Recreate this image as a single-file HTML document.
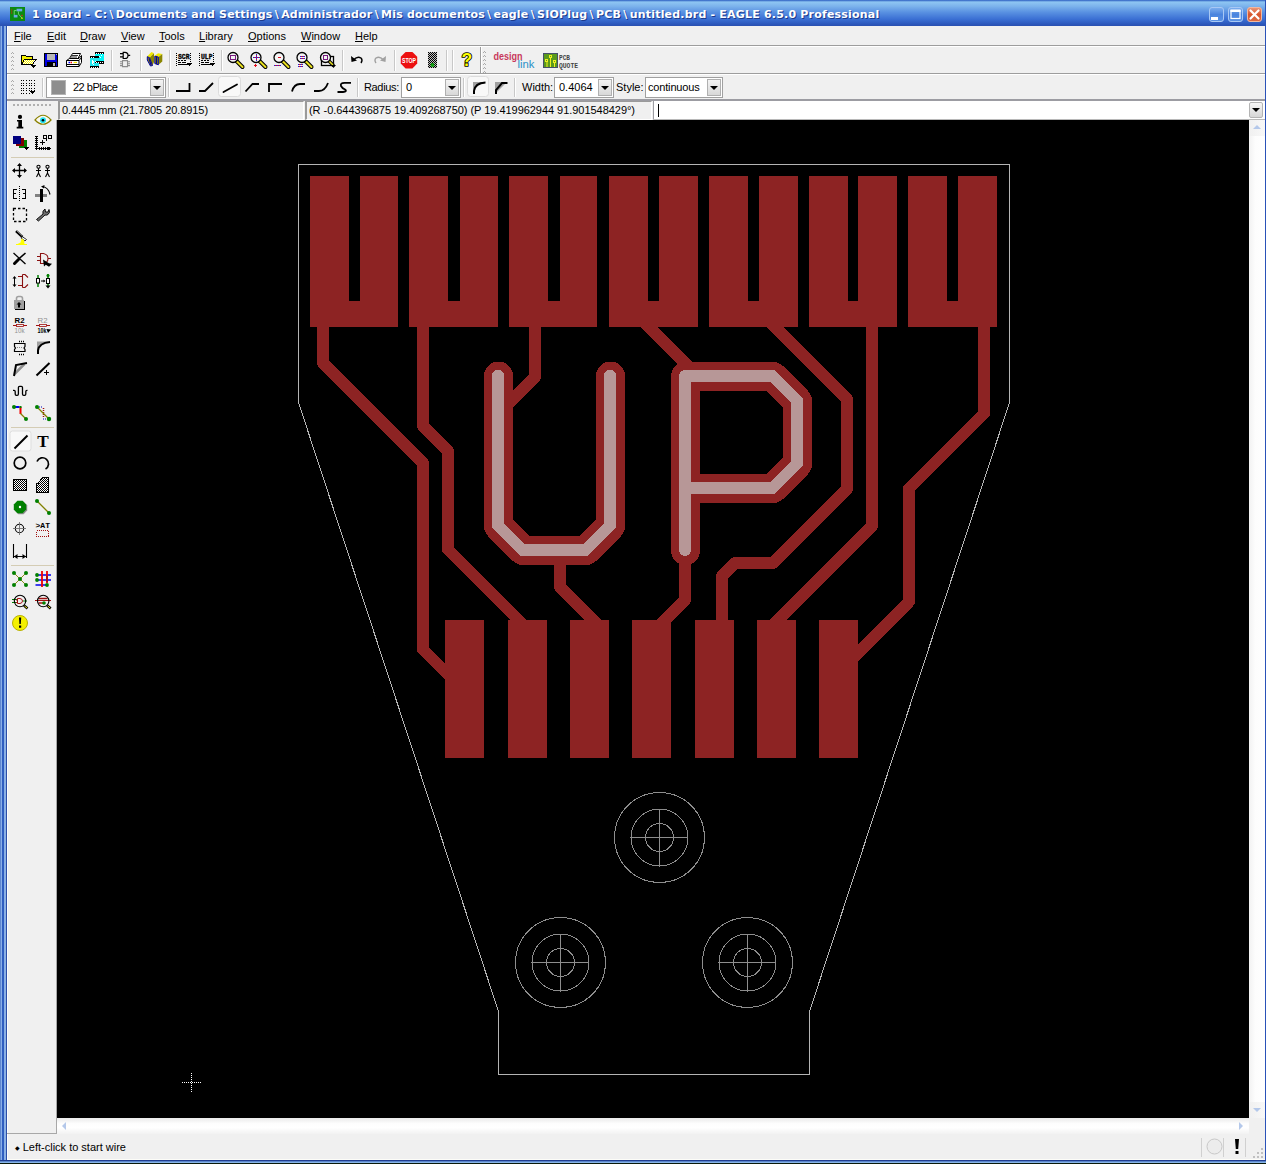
<!DOCTYPE html>
<html><head><meta charset="utf-8"><title>1 Board - EAGLE 6.5.0 Professional</title>
<style>
html,body{margin:0;padding:0;}
body{width:1266px;height:1164px;position:relative;overflow:hidden;background:#f0f0f0;font-family:"Liberation Sans","DejaVu Sans",sans-serif;font-size:11px;color:#000;}
.abs{position:absolute;}
#frameL{left:0;top:0;width:8px;height:1164px;background:linear-gradient(90deg,#6088d0 0,#6088d0 1px,#8ab0e8 1px,#8ab0e8 2px,#2f5ec0 2px,#2f5ec0 4px,#8ab0e4 4px,#8ab0e4 6px,#2a4ea8 6px,#2a4ea8 7px,#fdfdfd 7px);}
#frameR{left:1265px;top:0;width:1px;height:1164px;background:#2a52b8;}
#frameB{left:0;top:1160px;width:1266px;height:4px;background:linear-gradient(#203c90 0,#203c90 1px,#5a86cc 1px,#5a86cc 2px,#88b4e8 2px,#88b4e8 3px,#0a1a0a 3px);}
#title{left:0;top:0;width:1266px;height:26px;background:linear-gradient(#2a5cc0 0,#8ec6f2 2px,#7db4ec 6px,#5a92e2 12px,#3b70d4 19px,#2c58bc 24px,#2a50b0 26px);}
#title .txt{left:32px;top:8px;font-family:"DejaVu Sans","Liberation Sans",sans-serif;font-weight:bold;font-size:11px;color:#fff;white-space:nowrap;text-shadow:1px 1px 0 #1c3a8c;letter-spacing:0.2px;}
#title .txt b{margin:0 2.2px;}
.menu{top:29px;height:14px;line-height:14px;font-size:11px;white-space:nowrap;}
.menu u{text-decoration:underline;}
.hline{left:7px;width:1258px;height:1px;background:#9d9d9d;}
.hline2{left:7px;width:1258px;height:1px;background:#fff;}
#canvas{left:57px;top:120px;width:1192px;height:998px;background:#000;}
#board{position:absolute;left:0;top:0;}
.vsep{width:1px;height:20px;background:#c5c5c5;border-right:1px solid #fff;}
.combo{background:#fff;border:1px solid #a0a0a0;box-sizing:border-box;height:20px;}
.combo .btn{position:absolute;right:1px;top:1px;bottom:1px;width:14px;background:linear-gradient(#f4f4f4,#d8d8d8);border:1px solid #b0b0b0;box-sizing:border-box;}
.combo .btn:after{content:"";position:absolute;left:2px;top:6px;border:4px solid transparent;border-top:4px solid #000;border-bottom:none;}
.lbl{font-size:11px;white-space:nowrap;line-height:14px;}
.field{box-sizing:border-box;height:18px;border-top:1px solid #9a9a9a;border-left:2px solid #9a9a9a;border-right:1px solid #fff;border-bottom:1px solid #fff;}
</style></head><body>
<div id="title" class="abs">
 <svg class="abs" style="left:10px;top:7px" width="15" height="14" preserveAspectRatio="none" viewBox="0 0 16 16"><rect width="16" height="16" fill="#0b8a12"/><rect x="7" y="2" width="6" height="3" fill="#6aa8e8"/><rect x="4" y="9" width="4" height="3" fill="#6aa8e8"/><path d="M7,4H4.500V9M9,5V8L13,13" stroke="#6fdc6f" fill="none"/><rect x="12" y="9" width="1.5" height="1.5" fill="#e02020"/><rect x="12" y="12" width="1.5" height="1.5" fill="#f0f000"/><rect x="1" y="2" width="1.5" height="6" fill="#6b5a10"/></svg>
 <div class="abs txt">1 Board - C:<b>\</b>Documents and Settings<b>\</b>Administrador<b>\</b>Mis documentos<b>\</b>eagle<b>\</b>SIOPlug<b>\</b>PCB<b>\</b>untitled.brd - EAGLE 6.5.0 Professional</div>
 <svg class="abs" style="left:1205px;top:4px" width="60" height="20" viewBox="1205 4 60 20">
 <defs><linearGradient id="wb" x1="0" y1="0" x2="0" y2="1"><stop offset="0" stop-color="#7fb0ee"/><stop offset=".5" stop-color="#4a84de"/><stop offset="1" stop-color="#5a92e4"/></linearGradient>
 <linearGradient id="wc" x1="0" y1="0" x2="0" y2="1"><stop offset="0" stop-color="#ea9a7c"/><stop offset=".5" stop-color="#d8562e"/><stop offset="1" stop-color="#dc6a44"/></linearGradient></defs>
 <rect x="1209.5" y="7.5" width="14" height="14" rx="2.5" fill="url(#wb)" stroke="#a8c8f4"/>
 <rect x="1228.5" y="7.5" width="14" height="14" rx="2.5" fill="url(#wb)" stroke="#a8c8f4"/>
 <rect x="1247.5" y="7.5" width="14" height="14" rx="2.5" fill="url(#wc)" stroke="#f0b8a0"/>
 <rect x="1211" y="17" width="7" height="3" fill="#fff"/>
 <rect x="1231" y="10.5" width="9" height="8" fill="none" stroke="#fff" stroke-width="1.2"/><rect x="1230.5" y="9.5" width="10" height="2.5" fill="#fff"/>
 <path d="M1250.5,10.500l8,8M1258.5,10.500l-8,8" stroke="#fff" stroke-width="2.2" stroke-linecap="round"/>
</svg>

</div>
<div id="frameL" class="abs" style="top:26px;height:1134px"></div>
<div id="frameR" class="abs"></div>
<div id="frameB" class="abs"></div><div class="abs" style="left:7px;top:1159px;width:1258px;height:1px;background:#fdfdf8"></div>

<!-- menu -->
<div class="abs menu" style="left:14px"><u>F</u>ile</div>
<div class="abs menu" style="left:47px"><u>E</u>dit</div>
<div class="abs menu" style="left:80px"><u>D</u>raw</div>
<div class="abs menu" style="left:121px"><u>V</u>iew</div>
<div class="abs menu" style="left:159px"><u>T</u>ools</div>
<div class="abs menu" style="left:199px"><u>L</u>ibrary</div>
<div class="abs menu" style="left:248px"><u>O</u>ptions</div>
<div class="abs menu" style="left:301px"><u>W</u>indow</div>
<div class="abs menu" style="left:355px"><u>H</u>elp</div>
<div class="abs hline" style="top:45px"></div><div class="abs hline2" style="top:46px"></div>
<div class="abs hline" style="top:73px"></div><div class="abs hline2" style="top:74px"></div>
<div class="abs hline" style="top:99px"></div>

<!-- toolbar 1 -->
<svg class="abs" style="left:7px;top:47px" width="600" height="26" viewBox="7 47 600 26">
 <g fill="#aaa" shape-rendering="crispEdges"><rect x="12" y="52" width="1" height="1"/><rect x="11" y="53" width="1" height="1"/><rect x="13" y="53" width="1" height="1"/><rect x="12" y="56" width="1" height="1"/><rect x="11" y="57" width="1" height="1"/><rect x="13" y="57" width="1" height="1"/><rect x="12" y="60" width="1" height="1"/><rect x="11" y="61" width="1" height="1"/><rect x="13" y="61" width="1" height="1"/><rect x="12" y="64" width="1" height="1"/><rect x="11" y="65" width="1" height="1"/><rect x="13" y="65" width="1" height="1"/><rect x="12" y="68" width="1" height="1"/><rect x="11" y="69" width="1" height="1"/><rect x="13" y="69" width="1" height="1"/></g>
 <!-- open -->
 <defs><pattern id="dy" width="2" height="2" patternUnits="userSpaceOnUse"><rect width="2" height="2" fill="#f4f000"/><rect width="1" height="1" fill="#fff"/><rect x="1" y="1" width="1" height="1" fill="#fff"/></pattern></defs>
 <g shape-rendering="crispEdges"><path d="M21.5,64.500v-8.500l1,-1h3l1,1.500h5.500v3" fill="#f4f000" stroke="#000"/><path d="M21.5,64.500l3,-5h11.500l-3.5,5z" fill="url(#dy)" stroke="#000"/><path d="M31,65h5l-2.5,3z" fill="#000"/></g>
 <!-- save -->
 <g shape-rendering="crispEdges"><rect x="44.5" y="53.5" width="13" height="13" fill="#0000e0" stroke="#000"/><rect x="47" y="54" width="8" height="6" fill="#b8b8b8"/><rect x="47" y="62" width="9" height="5" fill="#000"/><rect x="53" y="63" width="2" height="3" fill="#b8b8b8"/><rect x="56" y="54" width="1" height="1" fill="#b8b8b8"/></g>
 <!-- print -->
 <g stroke-linejoin="round"><path d="M69.5,58.500l3,-5h8l-2.5,5z" fill="#fff" stroke="#000"/><path d="M66.5,60.500l3,-2h9.500l2.5,-3v7l-2.5,4h-12.500z" fill="#fff" stroke="#000"/><path d="M66.5,60.500h12.500v6M79,60.500l2.5,-3M67,64.500h12" stroke="#000" fill="none"/><path d="M68.5,62.500h1.5" stroke="#00f" stroke-width="1.3"/><path d="M70.5,62.500h1.5" stroke="#f00" stroke-width="1.3"/><path d="M73.5,62.500h3.5" stroke="#f0e000" stroke-width="1.3"/><path d="M72,55.500h6M71,57h6" stroke="#000" stroke-width=".8"/></g>
 <!-- cam -->
 <g shape-rendering="crispEdges"><rect x="95" y="52" width="9" height="12" fill="#000"/><rect x="95" y="54" width="9" height="8" fill="#00f8f8"/><rect x="90" y="56" width="9" height="12" fill="#000"/><rect x="90" y="58" width="9" height="8" fill="#20e8f0"/><rect x="95" y="61" width="9" height="2" fill="#000"/><path d="M96,53h8M91,57h3M91,67h8M96,62h8" stroke="#fff" stroke-dasharray="1 1"/><path d="M92,60l2,2l-2,2z" fill="#fff"/><path d="M99,56h1M101,55h1M100,57h1M93,64h1M95,61h1" stroke="#fff"/></g>
 <path d="M111.5,50v21M140.5,50v21M169.5,50v21M221.5,50v21M342.5,50v21M394.5,50v21M446.5,50v21M452.5,50v21" stroke="#c8c8c8"/>
 <path d="M112.5,50v21M141.5,50v21M170.5,50v21M222.5,50v21M343.5,50v21M395.5,50v21M447.5,50v21M453.5,50v21" stroke="#fff"/>
 <!-- board/schematic -->
 <g fill="none" stroke="#000" stroke-width="1.2"><path d="M120,53.700h3.200M120,56.800h3.200M123.2,52.300v6.200h1.700a3.1,3.1 0 0 0 0,-6.200zM127.8,55.300h2.400"/></g>
 <g fill="none" stroke="#8c8c8c" stroke-width="1.1"><path d="M122.5,60.600h5v6h-5zM120,61.800h2.500M120,63.700h2.500M120,65.600h2.500M127.5,61.800h2.500M127.5,63.700h2.500M127.5,65.600h2.5"/></g>
 <!-- library -->
 <g stroke-linejoin="round"><path d="M147,56.500L151.5,52L154,53.200L149.5,57.700z" fill="#f0e800"/><path d="M149.5,57.700L154,53.200V62L152.5,65.500z" fill="#8a8600"/><path d="M147.3,56.700L149.5,57.700L152.5,65.500L150.5,66L147.3,60z" fill="#8a8600" stroke="#0000a0"/><path d="M149,58.500l2,6.5" stroke="#0000a0" fill="none"/>
 <path d="M154.5,56L158,53.200L162.3,54L158.5,57z" fill="#f0e800"/><path d="M158.5,57L162.3,54V61.500L158.5,64.800z" fill="#8a8600"/><path d="M154.8,56.200L158.3,57V64.800L154.8,63.500z" fill="#8a8600" stroke="#0000a0"/><path d="M156.5,57v7" stroke="#0000a0" fill="none"/></g>
 <!-- SCR -->
 <g shape-rendering="crispEdges" stroke="#000" fill="none"><path d="M176.5,53v14M190.5,53v10" stroke-dasharray="1 1"/><path d="M178,60.500h2M181,60.500h2M184,60.500h2M178,62.500h3M182,62.500h4M178,64.500h12"/><path d="M187,63h5l-2.5,3.500z" fill="#000" stroke="none"/></g>
 <text x="178" y="58.5" font-family="Liberation Mono,monospace" font-weight="bold" font-size="7.5" stroke="#000" stroke-width=".35" textLength="11.5" lengthAdjust="spacingAndGlyphs">SCR</text>
 <g shape-rendering="crispEdges" stroke="#000" fill="none"><path d="M199.5,53v14M213.5,53v10" stroke-dasharray="1 1"/><path d="M201,60.500h2M204,60.500h2M207,60.500h2M201,62.500h3M205,62.500h4M201,64.500h12"/><path d="M210,63h5l-2.5,3.500z" fill="#000" stroke="none"/></g>
 <text x="201" y="58.5" font-family="Liberation Mono,monospace" font-weight="bold" font-size="7.5" stroke="#000" stroke-width=".35" textLength="11.5" lengthAdjust="spacingAndGlyphs">ULP</text>
 <!-- zooms -->
 <g id="zm"><path d="M236.5,61l6,6" stroke="#000" stroke-width="4" stroke-linecap="round"/><path d="M237,61.500l5.5,5.5" stroke="#e8e020" stroke-width="2" stroke-linecap="round"/><circle cx="233" cy="57.5" r="5" fill="#f4f4f4" stroke="#000" stroke-width="1.3"/></g>
 <use href="#zm" x="23"/><use href="#zm" x="46"/><use href="#zm" x="69"/>
 <rect x="230.5" y="55.5" width="5" height="4" fill="none" stroke="#d01020" /><rect x="230.5" y="55.5" width="5" height="4" fill="none" stroke="#2020e0" stroke-dasharray="1 1"/>
 <path d="M253,57.500h7M256.5,54v7M254,65.500h3M255.5,64v3" stroke="#e01020" fill="none"/><path d="M253,57.500h7M256.5,54v7" stroke="#2020e0" stroke-dasharray="1 1" fill="none"/>
 <path d="M278,57.500h3M274,65.500h7" stroke="#e01020"/><path d="M274,65.500h7" stroke="#2020e0" stroke-dasharray="1 1"/>
 <path d="M300,56.500h5M300,58.500h5M298,64.500h5M298,66.500h5" stroke="#e01020"/><path d="M300,56.500h5M300,58.500h5M298,64.500h5M298,66.500h5" stroke="#2020e0" stroke-dasharray="1 1"/>
 <!-- zoom select -->
 <g><rect x="321.5" y="56.5" width="12" height="9" fill="#f4f4f4" stroke="#000" stroke-width="1.3"/><path d="M329,61l4,4" stroke="#000" stroke-width="3.5" stroke-linecap="round"/><path d="M329.5,61.500l3,3" stroke="#e8e020" stroke-width="1.5" stroke-linecap="round"/><circle cx="325.5" cy="57.5" r="5" fill="#f4f4f4" stroke="#000" stroke-width="1.3"/><rect x="323.5" y="55.5" width="4" height="4" fill="none" stroke="#d01020"/><rect x="323.5" y="55.5" width="4" height="4" fill="none" stroke="#2020e0" stroke-dasharray="1 1"/><path d="M331,65h5l-2.5,3z" fill="#000"/></g>
 <!-- undo/redo -->
 <path d="M353,60.500q4,-5 8,-2.500q2,2 0,5" fill="none" stroke="#000" stroke-width="1.400"/><path d="M351,56l.5,6l5.5,-1.500z" fill="#000"/>
 <path d="M384,60.500q-4,-5 -8,-2.500q-2,2 0,5" fill="none" stroke="#a0a0a0" stroke-width="1.400"/><path d="M386,56l-.5,6l-5.5,-1.500z" fill="#a0a0a0"/>
 <!-- stop -->
 <path d="M405.600,52h6.800l4.8,4.800v6.800l-4.8,4.800h-6.800l-4.8,-4.800v-6.800z" fill="#ec1010"/>
 <text x="402" y="63" font-family="Liberation Sans,sans-serif" font-weight="bold" font-size="7" fill="#fff" textLength="14" lengthAdjust="spacingAndGlyphs">STOP</text>
 <!-- go -->
 <defs><pattern id="dith" width="2" height="2" patternUnits="userSpaceOnUse"><rect width="2" height="2" fill="#c0c0c0"/><rect width="1" height="1" fill="#000"/><rect x="1" y="1" width="1" height="1" fill="#000"/></pattern></defs>
 <rect x="428" y="52" width="9" height="16" fill="url(#dith)" shape-rendering="crispEdges"/><circle cx="432.5" cy="65" r="2" fill="#10a010"/>
 <!-- help -->
 <text x="461.5" y="66.3" font-family="Liberation Sans,sans-serif" font-weight="bold" font-size="17.5" fill="#ffff00" stroke="#000" stroke-width="1.700" stroke-linejoin="round" paint-order="stroke">?</text>
 <!-- toolbar divider -->
 <path d="M480.5,47v26" stroke="#9d9d9d"/><path d="M481.5,47v26" stroke="#fff"/>
 <g fill="#aaa" shape-rendering="crispEdges"><rect x="484" y="51" width="1" height="1"/><rect x="483" y="52" width="1" height="1"/><rect x="485" y="52" width="1" height="1"/><rect x="484" y="55" width="1" height="1"/><rect x="483" y="56" width="1" height="1"/><rect x="485" y="56" width="1" height="1"/><rect x="484" y="59" width="1" height="1"/><rect x="483" y="60" width="1" height="1"/><rect x="485" y="60" width="1" height="1"/><rect x="484" y="63" width="1" height="1"/><rect x="483" y="64" width="1" height="1"/><rect x="485" y="64" width="1" height="1"/><rect x="484" y="67" width="1" height="1"/><rect x="483" y="68" width="1" height="1"/><rect x="485" y="68" width="1" height="1"/><rect x="484" y="71" width="1" height="1"/><rect x="483" y="72" width="1" height="1"/><rect x="485" y="72" width="1" height="1"/></g>
 <text x="493.5" y="60" font-family="Liberation Sans,sans-serif" font-weight="bold" font-size="11" fill="#c8385c" textLength="29" lengthAdjust="spacingAndGlyphs">design</text>
 <text x="517.5" y="67.5" font-family="Liberation Sans,sans-serif" font-size="10" fill="#2a90c8" textLength="17" lengthAdjust="spacingAndGlyphs">link</text>
 <rect x="543.5" y="53.5" width="14" height="14" fill="#5a9a1c" stroke="#46506a"/><g stroke="#f0f020" fill="none"><path d="M550.5,57v10M547,61v6M554.5,63v4"/><rect x="549.5" y="55.5" width="2" height="2"/><rect x="545.5" y="59.5" width="2" height="2"/><rect x="553.5" y="60.5" width="2" height="2"/></g>
 <text x="559" y="59.5" font-family="Liberation Mono,monospace" font-weight="bold" font-size="7" fill="#444" textLength="11" lengthAdjust="spacingAndGlyphs">PCB</text>
 <text x="559" y="68" font-family="Liberation Mono,monospace" font-weight="bold" font-size="7" fill="#444" textLength="19" lengthAdjust="spacingAndGlyphs">QUOTE</text>
</svg>

<!-- toolbar 2 -->
<svg class="abs" style="left:7px;top:75px" width="600" height="24" viewBox="7 75 600 24">
 <g fill="#aaa" shape-rendering="crispEdges"><rect x="12" y="80" width="1" height="1"/><rect x="11" y="81" width="1" height="1"/><rect x="13" y="81" width="1" height="1"/><rect x="12" y="84" width="1" height="1"/><rect x="11" y="85" width="1" height="1"/><rect x="13" y="85" width="1" height="1"/><rect x="12" y="88" width="1" height="1"/><rect x="11" y="89" width="1" height="1"/><rect x="13" y="89" width="1" height="1"/><rect x="12" y="92" width="1" height="1"/><rect x="11" y="93" width="1" height="1"/><rect x="13" y="93" width="1" height="1"/></g>
 <g fill="#000" shape-rendering="crispEdges"><rect x="21" y="80" width="1" height="1"/><rect x="23" y="80" width="1" height="1"/><rect x="26" y="80" width="1" height="1"/><rect x="29" y="80" width="1" height="1"/><rect x="31" y="80" width="1" height="1"/><rect x="34" y="80" width="1" height="1"/><rect x="21" y="83" width="1" height="1"/><rect x="23" y="83" width="1" height="1"/><rect x="26" y="83" width="1" height="1"/><rect x="29" y="83" width="1" height="1"/><rect x="31" y="83" width="1" height="1"/><rect x="34" y="83" width="1" height="1"/><rect x="21" y="85" width="1" height="1"/><rect x="23" y="85" width="1" height="1"/><rect x="26" y="85" width="1" height="1"/><rect x="29" y="85" width="1" height="1"/><rect x="31" y="85" width="1" height="1"/><rect x="34" y="85" width="1" height="1"/><rect x="21" y="88" width="1" height="1"/><rect x="23" y="88" width="1" height="1"/><rect x="26" y="88" width="1" height="1"/><rect x="29" y="88" width="1" height="1"/><rect x="31" y="88" width="1" height="1"/><rect x="34" y="88" width="1" height="1"/><rect x="21" y="90" width="1" height="1"/><rect x="23" y="90" width="1" height="1"/><rect x="26" y="90" width="1" height="1"/><rect x="29" y="90" width="1" height="1"/><rect x="31" y="90" width="1" height="1"/><rect x="34" y="90" width="1" height="1"/><rect x="21" y="93" width="1" height="1"/><rect x="23" y="93" width="1" height="1"/><rect x="26" y="93" width="1" height="1"/><rect x="29" y="93" width="1" height="1"/><path d="M30,91h5l-2.5,3z"/></g>
 <path d="M42.5,78v19M168.5,78v19M357.5,78v19M463.5,78v19M514.5,78v19" stroke="#c8c8c8"/><path d="M43.5,78v19M169.5,78v19M358.5,78v19M464.5,78v19M515.5,78v19" stroke="#fff"/>
 <!-- selected highlights -->
 <rect x="218.5" y="76.5" width="22" height="20" rx="3" fill="#f8f8f8" stroke="#dcdcdc"/>
 <rect x="467.5" y="76.5" width="21" height="20" rx="3" fill="#f8f8f8" stroke="#dcdcdc"/>
 <g fill="none" stroke="#000" stroke-width="1.8">
  <path d="M176,91h13.500v-8"/>
  <path d="M199,91h6l8,-8"/>
  <path d="M223.5,92l13.5,-7.5" stroke-linecap="round"/>
  <path d="M245.5,91.500l7,-7.500h6.5"/>
  <path d="M269,92v-8h13"/>
  <path d="M292,91.500q2,-7.5 8,-7.500h5"/>
  <path d="M314,91h5q6,0 9,-8"/>
  <path d="M351,82.800H344.500Q340,83 341,86Q342,88 345,89.500Q347.5,91.5 343,92H337.5"/>
 </g>
 <path d="M473,82h12v1q-9,0 -11,10h-1z" fill="#a0a0a0"/><path d="M474,94v-3q1,-8 11.5,-8.5" fill="none" stroke="#000" stroke-width="2"/>
 <path d="M495,82h12l-11,11h-1z" fill="#a0a0a0"/><path d="M496,94v-4l6,-7h5.5" fill="none" stroke="#000" stroke-width="2"/>
</svg>
<div class="abs combo" style="left:46px;top:77px;width:120px;height:21px"><div class="abs" style="left:4px;top:2px;width:15px;height:15px;background:#8e8e8e;border:1px solid #b4b4b4;box-sizing:border-box"></div><div class="abs lbl" style="left:26px;top:2px;letter-spacing:-0.5px">22 bPlace</div><div class="btn"></div></div>
<div class="abs lbl" style="left:364px;top:80px;letter-spacing:-0.35px">Radius:</div>
<div class="abs combo" style="left:401px;top:77px;width:60px;height:21px"><div class="abs lbl" style="left:4px;top:2px">0</div><div class="btn"></div></div>
<div class="abs lbl" style="left:522px;top:80px">Width:</div>
<div class="abs combo" style="left:554px;top:77px;width:60px;height:21px"><div class="abs lbl" style="left:4px;top:2px">0.4064</div><div class="btn"></div></div>
<div class="abs lbl" style="left:616px;top:80px">Style:</div>
<div class="abs combo" style="left:645px;top:77px;width:78px;height:21px"><div class="abs lbl" style="left:2px;top:2px;letter-spacing:-0.17px">continuous</div><div class="btn"></div></div>

<!-- coord bar -->
<div class="abs" style="left:7px;top:99px;width:1258px;height:2px;background:#9c9ca2"></div>
<div class="abs" style="left:13px;top:104px;width:40px;height:2px;background:repeating-linear-gradient(90deg,#b0b0b0 0,#b0b0b0 2px,transparent 2px,transparent 4px)"></div>
<div class="abs field" style="left:58px;top:101px;width:246px;height:19px"><div class="abs lbl" style="left:2px;top:1px;letter-spacing:-0.075px">0.4445 mm (21.7805 20.8915)</div></div>
<div class="abs field" style="left:305px;top:101px;width:347px;height:19px"><div class="abs lbl" style="left:2px;top:1px;letter-spacing:-0.04px">(R -0.644396875 19.409268750) (P 19.419962944 91.901548429°)</div></div>
<div class="abs" style="left:653px;top:101px;width:612px;height:18px;background:#fff;border-left:1px solid #9c9ca2;box-sizing:border-box"></div>
<div class="abs" style="left:653px;top:119px;width:612px;height:1px;background:#b8b8b8"></div>
<div class="abs" style="left:658px;top:104px;width:1px;height:13px;background:#000"></div>
<div class="abs" style="left:1249px;top:102px;width:14px;height:16px;background:linear-gradient(#f6f6f6,#d6d6d6);border:1px solid #b4b4b4;border-radius:2px;box-sizing:border-box"><div class="abs" style="left:2px;top:5px;border:4px solid transparent;border-top:4px solid #000;border-bottom:none"></div></div>
<!-- scrollbars -->
<div class="abs" style="left:1249px;top:120px;width:16px;height:998px;background:linear-gradient(90deg,#f2f2f2,#fdfdfd 40%,#fff)"></div>
<div class="abs" style="left:1249px;top:120px;width:16px;height:16px;background:linear-gradient(90deg,#f0f0f0,#f8f8f8)"></div>
<div class="abs" style="left:1249px;top:1102px;width:16px;height:16px;background:linear-gradient(90deg,#f0f0f0,#f8f8f8)"></div>
<div class="abs" style="left:1253px;top:125px;border:4px solid transparent;border-bottom:4px solid #b4c8ea;border-top:none"></div>
<div class="abs" style="left:1253px;top:1108px;border:4px solid transparent;border-top:4px solid #b4c8ea;border-bottom:none"></div>
<div class="abs" style="left:57px;top:1118px;width:1192px;height:16px;background:linear-gradient(#eaeaea,#fdfdfd 35%,#fff 60%,#f2f2f2)"></div>
<div class="abs" style="left:62px;top:1122px;border:4px solid transparent;border-right:4px solid #b4c8ea;border-left:none"></div>
<div class="abs" style="left:1239px;top:1122px;border:4px solid transparent;border-left:4px solid #b4c8ea;border-right:none"></div>
<!-- left bar edge -->
<div class="abs" style="left:56px;top:120px;width:1px;height:1013px;background:#a8a8a8"></div>
<div class="abs" style="left:7px;top:1133px;width:50px;height:1px;background:#a8a8a8"></div>
<!-- status -->
<div class="abs lbl" style="left:15px;top:1140px"><span style="font-size:6px;position:relative;top:-1px">&#9670;</span> Left-click to start wire</div>
<svg class="abs" style="left:1195px;top:1136px" width="70" height="24" viewBox="1195 1136 70 24">
 <path d="M1201.5,1138v19M1223.5,1138v19M1245.5,1138v19" stroke="#d0d0d0"/>
 <circle cx="1214.5" cy="1146.5" r="7.5" fill="#ececec" stroke="#c8c8c8"/>
 <path d="M1235,1139h4l-.8,10h-2.400zM1235.5,1151h3v3h-3z" fill="#000"/>
 <g fill="#c0c0c0"><rect x="1261" y="1148" width="2" height="2"/><rect x="1261" y="1152" width="2" height="2"/><rect x="1261" y="1156" width="2" height="2"/><rect x="1257" y="1152" width="2" height="2"/><rect x="1257" y="1156" width="2" height="2"/><rect x="1253" y="1156" width="2" height="2"/></g>
</svg>

<!-- left toolbar -->
<svg class="abs" style="left:7px;top:108px" width="49" height="530" viewBox="7 108 49 530">
<defs><pattern id="dw" width="2" height="2" patternUnits="userSpaceOnUse"><rect width="2" height="2" fill="#fff"/><rect width="1" height="1" fill="#000"/><rect x="1" y="1" width="1" height="1" fill="#000"/></pattern></defs>
<path d="M11,157.500h43M11,427.500h43M11,565.500h43" stroke="#d4ccb4"/>
<!-- info -->
<circle cx="20" cy="116.900" r="2.1" fill="#000"/><path d="M17,120h5v6.800h1.300v1.600h-6.600v-1.600h1.600v-5.200h-1.300z" fill="#000"/>
<!-- eye -->
<path d="M35,120q8,-9.5 16,0q-8,8.5 -16,0z" fill="#f8f8f0" stroke="#8a8000" stroke-width="1.2"/><circle cx="43" cy="120.3" r="3" fill="#20e0f0"/><circle cx="43" cy="120.3" r="1.3" fill="#000"/>
<!-- layers -->
<g shape-rendering="crispEdges"><rect x="19" y="140" width="8" height="8" fill="#008000"/><rect x="16" y="138" width="8" height="8" fill="#800000"/><rect x="13" y="136" width="8" height="8" fill="#000080"/><path d="M23,147h6l-3,3z" fill="#000"/></g>
<!-- mark -->
<g stroke="#000" fill="none" shape-rendering="crispEdges"><path d="M36.5,136v13.500M35,148.500h15" stroke-width="1"/><path d="M35,136.500h3M35,138.500h3M35,140.500h3M35,142.500h3M35,144.500h3M35,146.500h3" /><path d="M39.5,147v3M41.5,147v3M43.5,147v3M45.5,147v3M47.5,147v3"/><path d="M40,142.500h5M42.5,140v5"/><path d="M43.5,135.500h3v3h-3zM46.5,138v3M48.5,135.500h3v3h-3z"/><path d="M48,147l2.5,1.500l-2.5,1.500z" fill="#000"/></g>
<!-- move -->
<path d="M19.5,164v13M13,170.500h13" stroke="#000" stroke-width="1.3"/><path d="M19.5,163l2.5,3h-5zM19.5,178l2.5,-3h-5zM12,170.500l3,-2.500v5zM27,170.500l-3,-2.500v5z" fill="#000"/>
<!-- copy -->
<g id="man" stroke="#000" fill="none" stroke-width="1.1"><circle cx="38.5" cy="166.8" r="1.600"/><path d="M38.5,168.500v4.500M36,170.500h5M38.5,173l-2,4M38.5,173l2,4"/></g><use href="#man" x="9"/>
<!-- mirror -->
<g stroke="#000" fill="none" shape-rendering="crispEdges"><path d="M19.5,186v15" stroke-dasharray="1 1"/><path d="M17,189.500h-3.500v9h3.500M13,193.500h3M22,189.500h3.500v9h-3.500M26,193.500h-3" stroke-width="1.3"/></g>
<!-- rotate -->
<rect x="35" y="194" width="12" height="3" fill="#808080"/><rect x="40" y="189" width="3" height="13" fill="#000"/><path d="M42.5,186.500q6,1 7.5,8" fill="none" stroke="#000" stroke-width="1.2"/><path d="M41,186.500l3.5,-1.500l-.5,3.500z" fill="#000"/>
<!-- group -->
<rect x="13.5" y="208.5" width="13" height="13" fill="none" stroke="#000" stroke-width="1.3" stroke-dasharray="2.5 2"/>
<!-- change (wrench) -->
<path d="M36.5,219.500l6.5,-5.500q-1,-3 2,-5l.5,3h2.500l1,-2.500q1.5,3 -1,5q-1.5,1 -3,.5l-6.5,6z" fill="#707070" stroke="#000" stroke-width=".9"/>
<!-- paste -->
<path d="M16,231l6.5,6" stroke="#000" stroke-width="2.400"/><path d="M16.5,230.500l6,5.5" stroke="#fff" stroke-width=".6"/><path d="M22,236.500l4.5,3l-1.5,1.500l-4,-3z" fill="#fff" stroke="#000" stroke-width=".8"/><path d="M16,245h11v-1h-2.500l-.5,-4l-2.5,-1.500l-1,4l-3,1.500h-1.500z" fill="#ff0"/>
<!-- delete -->
<path d="M13.5,253l12,11" stroke="#000" stroke-width="1.3"/><path d="M14.5,263.500l4,-4" stroke="#000" stroke-width="3" stroke-linecap="round"/><path d="M18,259.500l7.5,-6.5" stroke="#000" stroke-width="1.600"/>
<!-- add -->
<g stroke="#8a1010" fill="none" stroke-width="1.1"><path d="M37,256.500h3.500M37,260.500h3.500M40.5,253.500v10h3q4.5,-1 4.5,-5t-4.5,-5zM48,258.500h3"/></g><path d="M43,259.500l1,7l1.8,-1.700l3.2,2l1,-1l2,-2l-3,-.5z" fill="#000"/>
<!-- pinswap -->
<path d="M14.5,277.500v8" stroke="#000"/><path d="M14.5,276l2,2.500h-4zM14.5,287l2,-2.500h-4z" fill="#000"/><g stroke="#8a1010" fill="none" stroke-width="1.1"><path d="M18,276.500h4.500M18,285.500h4.500M22.5,274.500v13M22.5,274.500h2.500l3,3M22.5,287.500h2.500l3,-3"/></g>
<!-- replace -->
<g><path d="M38,275v12" stroke="#008000" stroke-width="1.5"/><rect x="36.5" y="278.5" width="3" height="4.5" fill="#fff" stroke="#000"/><path d="M41,281h3" stroke="#000"/><path d="M43.5,279.500l2,1.500l-2,1.500z" fill="#000"/><path d="M48,274v13" stroke="#008000" stroke-width="1.5"/><circle cx="48" cy="275.5" r="1.5" fill="#008000"/><rect x="46.5" y="278.5" width="3" height="5" fill="#fff" stroke="#000"/><path d="M45.5,285.500h5l-2.5,3z" fill="#000"/></g>
<!-- lock -->
<path d="M16.5,301v-2.500q0,-2 2,-2h2q2,0 2,2v2.5" fill="none" stroke="#a0a0a0" stroke-width="1.600"/><rect x="15" y="301" width="10" height="9" fill="#000"/><rect x="14" y="300" width="10" height="9" fill="#a0a0a0"/><path d="M19,302l2.5,2.500h-1.500v3h-2v-3h-1.500z" fill="#000"/>
<!-- name -->
<text x="14.5" y="323" font-family="Liberation Sans,sans-serif" font-weight="bold" font-size="6.5" textLength="10" lengthAdjust="spacingAndGlyphs">R2</text>
<path d="M13,325.500h14" stroke="#a01010"/><rect x="16.5" y="324.5" width="7" height="2" fill="#f0f0f0" stroke="#a01010" stroke-width=".8"/>
<text x="14.5" y="333" font-family="Liberation Sans,sans-serif" font-size="6.5" fill="#909090" textLength="10" lengthAdjust="spacingAndGlyphs">10k</text>
<text x="37.5" y="323" font-family="Liberation Sans,sans-serif" font-size="6.5" fill="#909090" textLength="10" lengthAdjust="spacingAndGlyphs">R2</text>
<path d="M36,325.500h14" stroke="#a01010"/><rect x="39.5" y="324.5" width="7" height="2" fill="#f0f0f0" stroke="#a01010" stroke-width=".8"/>
<text x="37.5" y="333" font-family="Liberation Sans,sans-serif" font-weight="bold" font-size="6.5" textLength="9" lengthAdjust="spacingAndGlyphs">10k</text><path d="M46.5,329l4.5,.5l-3,3.500z" fill="#000"/>
<!-- smash -->
<g stroke="#000" fill="none"><path d="M14.5,343.500h10.500v3l-1,1.500l1,1.500v2h-10.500v-2l1,-1.500l-1,-1.500z" stroke-width="1.2"/><path d="M19,341.500h5M19,354.500h5" stroke-dasharray="1 1" stroke-width="1.5"/><path d="M17,347.500h6" stroke="#888" stroke-dasharray="1 1"/></g>
<!-- miter -->
<path d="M37,341.500h12q-9,1.5 -11,9h-1z" fill="#a0a0a0"/><path d="M38,354v-3.500q1,-7.5 12,-8.5" fill="none" stroke="#000" stroke-width="2"/>
<!-- split -->
<path d="M14.5,374l10,-10" stroke="#909090" stroke-width="2.5"/><path d="M14,376l2,-11l11,-2" fill="none" stroke="#000" stroke-width="2"/>
<!-- optimize -->
<path d="M36.5,375.500l13,-12.5" stroke="#000" stroke-width="2"/><path d="M44,372.500h5M46.5,370v5" stroke="#000"/>
<!-- meander -->
<path d="M13,390.300H14Q15.2,390.3 15.2,391.500V394Q15.2,395.3 16.400,395.300H17.200Q18.400,395.3 18.400,394V387.500Q18.400,386.3 19.600,386.300H21.300Q22.5,386.3 22.5,387.500V394Q22.5,395.3 23.700,395.300H24.600Q25.8,395.3 25.8,394V391.500Q25.8,390.3 27,390.300H27.5" fill="none" stroke="#000" stroke-width="1.3"/>
<!-- route -->
<path d="M14,407h5.5" stroke="#0000f0" stroke-width="2"/><path d="M20.5,407v7" stroke="#f00000" stroke-width="2"/><path d="M20.5,413.500l5.5,5.5" stroke="#808000" stroke-width="1.3"/><rect x="19.5" y="406" width="2" height="2" fill="#008000"/><circle cx="14" cy="407" r="2" fill="#008000"/><circle cx="26" cy="419" r="2" fill="#008000"/>
<!-- ripup -->
<path d="M39,407h4M43,419h4" stroke="#0000c0" stroke-dasharray="1 1"/><path d="M43.5,408v10" stroke="#a01010" stroke-dasharray="1 1" stroke-width="1.5"/><path d="M37,407l12,12" stroke="#808000" stroke-width="1.3"/><circle cx="37" cy="407" r="2" fill="#008000"/><circle cx="49" cy="419" r="2.2" fill="#008000"/>
<!-- wire selected -->
<rect x="10" y="431" width="21" height="20" rx="2.5" fill="#f8f8f8" stroke="#dedede"/>
<path d="M14.5,448.500l13,-13" stroke="#000" stroke-width="2"/>
<text x="37.2" y="447" font-family="Liberation Serif,serif" font-weight="bold" font-size="17" textLength="11.5" lengthAdjust="spacingAndGlyphs">T</text>
<circle cx="20" cy="463" r="5.8" fill="none" stroke="#000" stroke-width="1.700"/>
<path d="M37,461.500a6,6 0 1 1 8.5,7.5" fill="none" stroke="#000" stroke-width="1.700"/>
<!-- rect / polygon -->
<rect x="13.5" y="479.5" width="13" height="11" fill="url(#dw)" stroke="#000" shape-rendering="crispEdges"/>
<path d="M36.5,492.500v-9.500h2l4,-5.500h6v15z" fill="url(#dw)" stroke="#000" shape-rendering="crispEdges"/>
<!-- via -->
<path d="M18.400,501.800h5.200l3.600,3.600v5.200l-3.600,3.600h-5.200l-3.600,-3.600v-5.200z" fill="#909090"/><path d="M17.400,500.800h5.200l3.600,3.600v5.200l-3.600,3.600h-5.200l-3.600,-3.600v-5.200z" fill="#008000"/><circle cx="20" cy="507" r="1.2" fill="#fff"/>
<!-- signal -->
<path d="M37,501l12,12" stroke="#808000" stroke-width="1.3"/><circle cx="37" cy="501" r="2" fill="#008000"/><circle cx="49" cy="513" r="2" fill="#008000"/>
<!-- hole -->
<circle cx="19.5" cy="528.5" r="4.2" fill="none" stroke="#000" stroke-width="1.1"/><path d="M13,528.500h13M19.5,522v13" stroke="#707070" stroke-width=".9"/>
<!-- attribute -->
<text x="35.5" y="528" font-family="Liberation Mono,monospace" font-weight="bold" font-size="7" textLength="14.5" lengthAdjust="spacingAndGlyphs">&gt;AT</text>
<rect x="36.5" y="530.5" width="12" height="6" fill="none" stroke="#a01010" stroke-dasharray="1 1" stroke-width="1.3" shape-rendering="crispEdges"/>
<!-- dimension -->
<path d="M13.5,544v14M26.5,544v14M14,556.500h12" stroke="#000" stroke-width="1.1"/><path d="M14,556.500l3.5,-2.500v5zM26,556.500l-3.5,-2.500v5z" fill="#000"/>
<!-- ratsnest -->
<path d="M14,573l12,12M26,573l-12,12" stroke="#808000" stroke-width=".9"/><g fill="#008000"><circle cx="14" cy="573" r="2"/><circle cx="26" cy="573" r="2"/><circle cx="20" cy="579" r="2"/><circle cx="14" cy="585" r="2"/><circle cx="26" cy="585" r="2"/></g>
<!-- auto -->
<path d="M37,575h14M37,580h14M35.5,585h12" stroke="#0000f0" stroke-width="1.5"/><path d="M42,571v16M47,571v12" stroke="#f00000" stroke-width="1.8"/><path d="M47,576v6" stroke="#a01010" stroke-width="1.8"/><g fill="#008000"><circle cx="37" cy="575" r="1.900"/><circle cx="37" cy="580" r="1.900"/><circle cx="47" cy="585" r="1.900"/></g>
<!-- erc -->
<path d="M24,605.500l3.5,3" stroke="#000" stroke-width="2.5"/><path d="M24.5,606l2.5,2" stroke="#e8e020" stroke-width="1"/><path d="M12,599.500h6M12,602.500h6M23,601h4" stroke="#008000"/><path d="M17.5,598.500v5h2.500q2.5,-.5 2.5,-2.500t-2.5,-2.500zM16,600h1.500M16,602.500h1.5" fill="none" stroke="#a01010" stroke-width="1"/><circle cx="20" cy="601" r="5.700" fill="none" stroke="#000" stroke-width="1.1"/>
<!-- drc -->
<path d="M47.2,605.500l3.5,3" stroke="#000" stroke-width="2.5"/><path d="M47.700,606l2.5,2" stroke="#e8e020" stroke-width="1"/><path d="M35,600.500h16" stroke="#a01010"/><path d="M38.5,598.500h9M38.5,603h5" stroke="#a01010" stroke-width="1.5"/><circle cx="44" cy="603" r="1.8" fill="#008000"/><circle cx="43.2" cy="601" r="5.700" fill="none" stroke="#000" stroke-width="1.1"/>
<!-- errors -->
<circle cx="20" cy="623" r="7.5" fill="#f4f000" stroke="#b8b000" stroke-width="1"/><path d="M19,617.500h2.200l-.4,6.500h-1.400zM19,625.500h2.200v2.200h-2.200z" fill="#000"/>
</svg>


<div id="canvas" class="abs">
<svg id="board" width="1192" height="998" viewBox="57 120 1192 998" shape-rendering="crispEdges">
<rect x="57" y="120" width="1192" height="998" fill="#000"/>
<g fill="#8d2323">
<path d="M310,176H349V301H360V176H398V327H310Z"/>
<path d="M409,176H448V301H460V176H498V327H409Z"/>
<path d="M509,176H548V301H560V176H597V327H509Z"/>
<path d="M609,176H648V301H659V176H698V327H609Z"/>
<path d="M709,176H748V301H759V176H798V327H709Z"/>
<path d="M809,176H848V301H858V176H897V327H809Z"/>
<path d="M908,176H947V301H958V176H997V327H908Z"/>
<rect x="445" y="620" width="39" height="138"/>
<rect x="508" y="620" width="39" height="138"/>
<rect x="570" y="620" width="39" height="138"/>
<rect x="632" y="620" width="39" height="138"/>
<rect x="695" y="620" width="39" height="138"/>
<rect x="757" y="620" width="39" height="138"/>
<rect x="819" y="620" width="39" height="138"/>
</g>
<g fill="none" stroke="#8d2323" stroke-width="12" stroke-linejoin="round" stroke-linecap="round">
<path d="M323,320V363L423,463V649.5L465,691.5"/>
<path d="M423,320V426L448,451V549.5L530,631.5"/>
<path d="M535,320V377L500,412"/>
<path d="M640,318.3L690,368.3"/>
<path d="M765,317.2L847,399.2V489L773,563H735L722,576V630"/>
<path d="M872,320V526L771,627"/>
<path d="M984,320V413.5L909,488.5V601.6L850,660.6"/>
<path d="M560,560V587L600,627"/>
<path d="M685,560V600L660,625"/>
</g>
<g fill="none" stroke-linejoin="round" stroke-linecap="round">
<path d="M498.5,376V526L523,550.5H586L610.5,526V376" stroke="#8d2323" stroke-width="29"/><path d="M685.5,550.5V376.5H773L797.5,401V464L773,488.5H685.5" stroke="#8d2323" stroke-width="29"/>
<g transform="translate(-0.5,-0.5)"><path d="M498.5,376V526L523,550.5H586L610.5,526V376" stroke="#b79797" stroke-width="12"/><path d="M685.5,550.5V376.5H773L797.5,401V464L773,488.5H685.5" stroke="#b79797" stroke-width="12"/></g>
</g>
<path d="M298.5,164.5H1009.5V402.5L809.5,1011.5V1074.5H498.5V1011.5L298.5,402.5Z" fill="none" stroke="#b4b4b4" stroke-width="1"/>
<g fill="none" stroke="#8d8d8d" stroke-width="1">
<circle cx="659.5" cy="837.5" r="45"/><circle cx="659.5" cy="837.5" r="28.5"/><circle cx="659.5" cy="837.5" r="14"/>
<path d="M630.5,837.5H687.5M659.5,808.5V866.5"/>
<circle cx="560.5" cy="962.5" r="45"/><circle cx="560.5" cy="962.5" r="28.5"/><circle cx="560.5" cy="962.5" r="14"/>
<path d="M531.5,962.5H588.5M560.5,933.5V991.5"/>
<circle cx="747.5" cy="962.5" r="45"/><circle cx="747.5" cy="962.5" r="28.5"/><circle cx="747.5" cy="962.5" r="14"/>
<path d="M718.5,962.5H775.5M747.5,933.5V991.5"/>
</g>
<g fill="#fff"><rect x="182" y="1082" width="1" height="1"/><rect x="191" y="1073" width="1" height="1"/><rect x="184" y="1082" width="1" height="1"/><rect x="191" y="1075" width="1" height="1"/><rect x="186" y="1082" width="1" height="1"/><rect x="191" y="1077" width="1" height="1"/><rect x="188" y="1082" width="1" height="1"/><rect x="191" y="1079" width="1" height="1"/><rect x="190" y="1082" width="1" height="1"/><rect x="191" y="1081" width="1" height="1"/><rect x="192" y="1082" width="1" height="1"/><rect x="191" y="1083" width="1" height="1"/><rect x="194" y="1082" width="1" height="1"/><rect x="191" y="1085" width="1" height="1"/><rect x="196" y="1082" width="1" height="1"/><rect x="191" y="1087" width="1" height="1"/><rect x="198" y="1082" width="1" height="1"/><rect x="191" y="1089" width="1" height="1"/><rect x="200" y="1082" width="1" height="1"/><rect x="191" y="1091" width="1" height="1"/></g>
</svg>
</div>
<!--SCROLL-->
<!--STATUS-->
</body></html>
